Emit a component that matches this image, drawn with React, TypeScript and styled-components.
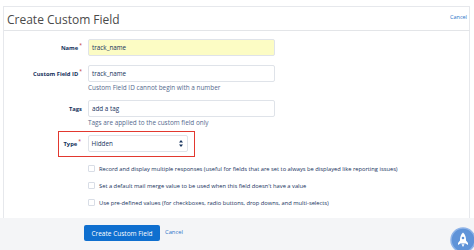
import styled, { createGlobalStyle } from 'styled-components'

const GlobalStyle = createGlobalStyle`
  html, body {
    margin: 0;
    padding: 0;
    background: #ffffff;
  }
  body {
    font-family: "Open Sans", "Noto Sans", sans-serif;
  }
`

interface FieldRowProps {
  label: string
  required?: boolean
  value: string
  highlight?: boolean
  help?: string
}

const checks = [
  'Record and display multiple responses (useful for fields that are set to always be displayed like reporting issues)',
  "Set a default mail merge value to be used when this field doesn't have a value",
  'Use pre-defined values (for checkboxes, radio buttons, drop downs, and multi-selects)',
]

const FieldRow = ({ label, required, value, highlight, help }: FieldRowProps) => {
  return (
    <Row>
      <Label>
        {label}
        {required && <Star>*</Star>}
      </Label>
      <FieldCol>
        <Input $highlight={highlight}>{value}</Input>
        {help && <Help>{help}</Help>}
      </FieldCol>
    </Row>
  )
}

const Rocket = () => (
  <svg width="26" height="26" viewBox="0 0 26 26">
    <circle cx="13" cy="13" r="12" fill="#5f93d8" stroke="#8fb4e8" strokeWidth="1.5" />
    <path d="M13 5.5 C15.2 7.5 16 10 16 13 L16 16.5 L10 16.5 L10 13 C10 10 10.8 7.5 13 5.5 Z" fill="#fff" />
    <path d="M10 13.5 L8 16 L8 18 L10 16.8 Z M16 13.5 L18 16 L18 18 L16 16.8 Z" fill="#fff" />
    <circle cx="13" cy="11" r="1.3" fill="#5f93d8" />
    <path d="M11.5 17.3 L14.5 17.3 L13 20 Z" fill="#fff" />
  </svg>
)

export default function App() {
  return (
    <Page>
      <GlobalStyle />
      <Panel>
        <Header>
          <Title>Create Custom Field</Title>
          <HeaderLink>Cancel</HeaderLink>
        </Header>
        <Form>
          <FieldRow label="Name" required value="track_name" highlight />
          <FieldRow
            label="Custom Field ID"
            required
            value="track_name"
            help="Custom Field ID cannot begin with a number"
          />
          <FieldRow label="Tags" value="add a tag" help="Tags are applied to the custom field only" />
          <Highlight>
            <TypeLabel>
              Type<Star>*</Star>
            </TypeLabel>
            <Select>
              Hidden
              <Arrows>
                <svg width="4" height="7" viewBox="0 0 4 7">
                  <path d="M2 0 L4 2.6 L0 2.6 Z M2 7 L4 4.4 L0 4.4 Z" fill="#16325c" />
                </svg>
              </Arrows>
            </Select>
          </Highlight>
          <Checks>
            {checks.map((text, index) => (
              <CheckRow key={index}>
                <Box />
                <span>{text}</span>
              </CheckRow>
            ))}
          </Checks>
        </Form>
      </Panel>
      <Footer>
        <Button>Create Custom Field</Button>
        <FooterLink>Cancel</FooterLink>
        <Avatar>
          <Rocket />
        </Avatar>
      </Footer>
    </Page>
  )
}

const Page = styled.div`
  width: 474px;
  height: 250px;
  overflow: hidden;
  display: flex;
  flex-direction: column;
  padding-top: 6px;
  box-sizing: border-box;
`

const Panel = styled.div`
  margin: 0 4px 0 3px;
  border: 1px solid #e6e8ec;
  border-bottom: none;
  background: #fff;
  height: 212px;
  box-sizing: border-box;
`

const Header = styled.div`
  height: 23px;
  margin-right: -1px;
  border-bottom: 1px solid #e3e5e8;
  display: flex;
  justify-content: space-between;
  align-items: flex-start;
  padding: 0 3px 0 3px;
`

const Title = styled.div`
  font-size: 12px;
  line-height: 16px;
  padding-top: 5px;
  color: #4a4a4a;
`

const HeaderLink = styled.div`
  font-size: 5.5px;
  padding-top: 6px;
  color: #2a72c7;
`

const Form = styled.div`
  display: flex;
  flex-direction: column;
  gap: 9px;
  padding-top: 8px;
`

const Row = styled.div`
  display: flex;
  align-items: flex-start;
`

const Label = styled.div`
  width: 78px;
  text-align: right;
  font-size: 5.8px;
  font-weight: 700;
  color: #16325c;
  padding-top: 5px;
  margin-right: 6px;
  white-space: nowrap;
`

const Star = styled.sup`
  color: #c23934;
  font-size: 5px;
  font-weight: 400;
  margin-left: 1px;
  vertical-align: 3px;
  line-height: 0;
`

const FieldCol = styled.div`
  display: flex;
  flex-direction: column;
`

const Input = styled.div<{ $highlight?: boolean }>`
  width: 187px;
  height: 17px;
  box-sizing: border-box;
  border: 1px solid #dfe3e9;
  border-radius: 2px;
  background: ${(p) => (p.$highlight ? '#fcfcc4' : '#fff')};
  font-size: 6.3px;
  color: #16325c;
  display: flex;
  align-items: center;
  padding-left: 3px;
`

const Help = styled.div`
  font-size: 6.4px;
  color: #54698d;
  line-height: 8px;
  margin-top: 2px;
  margin-bottom: -1px;
`

const Highlight = styled.div`
  align-self: flex-start;
  margin-left: 54px;
  margin-top: -4px;
  border: 1.5px solid #e2382f;
  padding: 2.5px 6px 4px 4.5px;
  display: flex;
  align-items: flex-start;
`

const TypeLabel = styled(Label)`
  width: 18px;
  text-align: left;
`

const Select = styled.div`
  width: 100px;
  height: 17px;
  box-sizing: border-box;
  border: 1px solid #dfe3e9;
  border-radius: 2px;
  background: #fff;
  font-size: 6.3px;
  color: #16325c;
  display: flex;
  align-items: center;
  justify-content: space-between;
  padding: 0 4px 0 3px;
`

const Arrows = styled.span`
  display: flex;
`

const Checks = styled.div`
  display: flex;
  flex-direction: column;
  gap: 9px;
  padding-left: 84px;
  margin-top: -1px;
`

const CheckRow = styled.div`
  display: flex;
  align-items: center;
  gap: 4px;
  font-size: 5.75px;
  color: #16325c;
  height: 8px;
  white-space: nowrap;
`

const Box = styled.span`
  width: 5px;
  height: 5px;
  border: 1px solid #d8dde6;
  border-radius: 1px;
  background: #fff;
`

const Footer = styled.div`
  flex: 1;
  background: #f4f5f7;
  display: flex;
  align-items: flex-start;
  padding: 7px 0 0 84px;
  position: relative;
`

const Button = styled.div`
  width: 76px;
  height: 16px;
  background: #0f6fcf;
  border-radius: 2px;
  color: #fff;
  font-size: 6.5px;
  display: flex;
  align-items: center;
  justify-content: center;
`

const FooterLink = styled.div`
  font-size: 5.8px;
  color: #2a72c7;
  margin-left: 5px;
  padding-top: 3px;
`

const Avatar = styled.div`
  position: absolute;
  right: -2px;
  bottom: -3px;
  display: flex;
`
